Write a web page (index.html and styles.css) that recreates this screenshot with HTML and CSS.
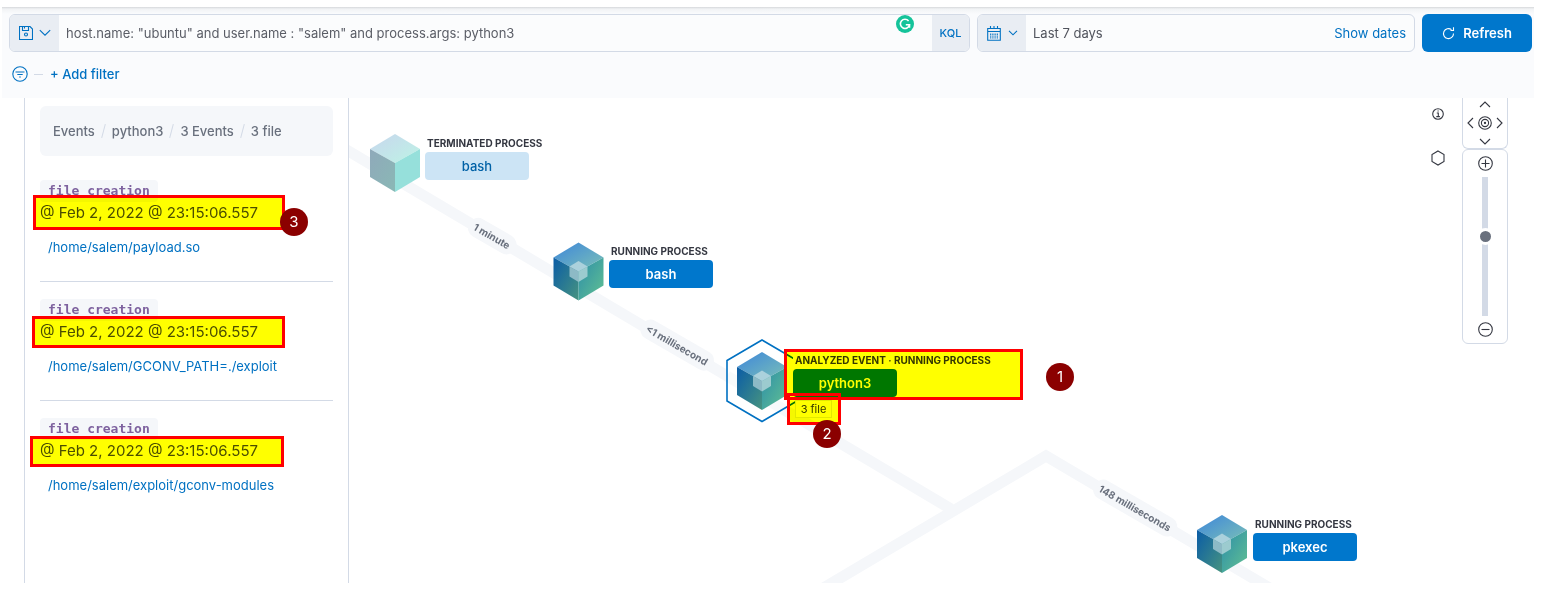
FILE: index.html
```html
<!DOCTYPE html>
<html lang="en">
<head>
<meta charset="utf-8">
<title>Event analyzer</title>
<link rel="stylesheet" href="styles.css">
</head>
<body>
<header class="query-bar">
  <form class="query-row">
    <div class="field search-field">
      <button type="button" class="field-addon saved-query" aria-label="Saved queries">
        <svg width="14" height="14" viewBox="0 0 14 14" class="icon"><path d="M.5.5h10.500l2.500 2.500v10.500h-13z M3.500 .5v4h6v-4 M5.500 .5v2"/><circle cx="7" cy="8.500" r="1.500"/></svg>
        <svg width="12" height="8" viewBox="0 0 12 8" class="icon"><path d="M.8 1.200 6 6.200l5.200-5"/></svg>
      </button>
      <input class="field-input" type="text" aria-label="Search" value='host.name: "ubuntu" and user.name : "salem" and process.args: python3'>
      <svg class="writing-badge" width="18" height="18" viewBox="0 0 18 18"><circle cx="9" cy="9" r="9" fill="#15c39a"/><path d="M12.600 6A4.600 4.600 0 1 0 13.500 9.800H9.800 M13.500 9.800v3" fill="none" stroke="#fff" stroke-width="1.600"/></svg>
      <button type="button" class="field-addon language">KQL</button>
    </div>
    <div class="field date-field">
      <button type="button" class="field-addon date-quick" aria-label="Quick select">
        <svg width="14" height="15" viewBox="0 0 14 15" class="icon"><path d="M.7 2.500h12.600v11.800H.7z M.7 5.500h12.600 M3.500 0v3 M7 0v3 M10.500 0v3"/><path d="M3.700 7.500v5 M5.900 7.500v5 M8.100 7.500v5 M10.300 7.500v5" stroke-dasharray="1.400 .5"/></svg>
        <svg width="10" height="6" viewBox="0 0 10 6" class="icon"><path d="M1 .8 5 4.800l4-4"/></svg>
      </button>
      <span class="date-value">Last 7 days</span>
      <button type="button" class="show-dates">Show dates</button>
    </div>
    <button type="button" class="refresh">
      <svg width="13" height="13" viewBox="0 0 13 13" class="icon"><path d="M11.500 6.500A5 5 0 1 1 9.500 2.600 M11.500 .3v3.200H8.500"/></svg>
      Refresh
    </button>
  </form>
  <div class="filter-row">
    <button type="button" class="filter-toggle" aria-label="Filter options">
      <svg width="16" height="16" viewBox="0 0 16 16" class="icon"><circle cx="8" cy="8" r="7.200"/><path d="M3.500 6h9 M5.300 8.500h5.400 M7.200 11h1.600"/></svg>
    </button>
    <span class="filter-dash"></span>
    <button type="button" class="add-filter">+ Add filter</button>
  </div>
</header>

<main class="workspace">
  <aside class="panel">
    <nav class="crumbs" aria-label="Breadcrumb">
      <a href="#">Events</a><i></i><a href="#">python3</a><i></i><a href="#">3 Events</a><i></i><span>3 file</span>
    </nav>
    <article class="event">
      <code class="event-kind">file creation</code>
      <time class="event-time">@ Feb 2, 2022 @ 23:15:06.557</time>
      <a class="event-path" href="#">/home/salem/payload.so</a>
    </article>
    <article class="event">
      <code class="event-kind">file creation</code>
      <time class="event-time">@ Feb 2, 2022 @ 23:15:06.557</time>
      <a class="event-path" href="#">/home/salem/GCONV_PATH=./exploit</a>
    </article>
    <article class="event">
      <code class="event-kind">file creation</code>
      <time class="event-time">@ Feb 2, 2022 @ 23:15:06.557</time>
      <a class="event-path" href="#">/home/salem/exploit/gconv-modules</a>
    </article>
    <div class="mark mark-time-1"></div>
    <div class="mark mark-time-2"></div>
    <div class="mark mark-time-3"></div>
    <div class="pin pin-3">3</div>
  </aside>

  <section class="graph" aria-label="Process graph">
    <svg class="edges">
      <defs>
        <linearGradient id="top" x1="0" y1="0" x2="1" y2="1"><stop offset=".2" stop-color="#4a92d3"/><stop offset="1" stop-color="#7cc2b6"/></linearGradient>
        <linearGradient id="left" x1="0" y1="0" x2="1" y2="1"><stop offset="0" stop-color="#0a5ca6"/><stop offset="1" stop-color="#479480"/></linearGradient>
        <linearGradient id="right" x1="0" y1="0" x2="1" y2="1"><stop offset="0" stop-color="#2c8da9"/><stop offset="1" stop-color="#62c192"/></linearGradient>
        <linearGradient id="top-off" x1="0" y1="0" x2="1" y2="1"><stop offset=".2" stop-color="#c6dcec"/><stop offset="1" stop-color="#bdf3e5"/></linearGradient>
        <linearGradient id="left-off" x1="0" y1="0" x2="1" y2="1"><stop offset="0" stop-color="#8fa9ba"/><stop offset="1" stop-color="#8ab8b5"/></linearGradient>
        <g id="cube">
          <path fill="url(#top)" d="M0-29 25-14 0 0-25-14z"/>
          <path fill="url(#left)" d="M-25-14 0 0V29L-25 14z"/>
          <path fill="url(#right)" d="M25-14 0 0V29L25 14z"/>
          <path fill="#abd1dc" d="M0-10.500 9-5 0 0-9-5z"/>
          <path fill="#8dbac6" d="M-9-5 0 0V10.500L-9 5z"/>
          <path fill="#9ccbcf" d="M9-5 0 0V10.500L9 5z"/>
        </g>
      </defs>
      <g transform="translate(-349 -98)">
        <g fill="none" stroke="#f5f7fa" stroke-width="11">
          <path d="M330 140 951 509"/>
          <path d="M815 593 1046 456 1278 593"/>
        </g>
        <g transform="translate(395 163)">
          <path fill="url(#top-off)" d="M0-29 25-14 0 0-25-14z"/>
          <path fill="url(#left-off)" d="M-25-14 0 0V29L-25 14z"/>
          <path fill="#96e0db" d="M25-14 0 0V29L25 14z"/>
        </g>
        <use href="#cube" x="578.500" y="271.500"/>
        <path d="M762 340 797 360.500V401L762 421.500 727 401V360.500z" fill="#fff"/>
        <path d="M727 376 803 421" stroke="#f5f7fa" stroke-width="11" opacity=".6"/>
        <path d="M762 340 797 360.500V401L762 421.500 727 401V360.500z" fill="none" stroke="#0071c2" stroke-width="1.600"/>
        <use href="#cube" x="762" y="381"/>
        <use href="#cube" x="1222" y="544"/>
      </g>
    </svg>

    <span class="elapsed elapsed-1">1 minute</span>
    <span class="elapsed elapsed-2">&lt;1 millisecond</span>
    <span class="elapsed elapsed-3">148 milliseconds</span>

    <div class="node node-terminated"><span class="node-state">Terminated process</span><button type="button" class="node-name ended">bash</button></div>
    <div class="node node-bash"><span class="node-state">Running process</span><button type="button" class="node-name">bash</button></div>
    <div class="node node-python"><span class="node-state">Analyzed event · Running process</span><button type="button" class="node-name">python3</button><button type="button" class="node-related">3 file</button></div>
    <div class="node node-pkexec"><span class="node-state">Running process</span><button type="button" class="node-name">pkexec</button></div>

    <div class="mark mark-node"></div>
    <div class="mark mark-files"></div>
    <div class="pin pin-1">1</div>
    <div class="pin pin-2">2</div>

    <div class="controls">
      <div class="legend">
        <button type="button" aria-label="Schema"><svg width="12" height="12" viewBox="0 0 12 12" class="icon"><circle cx="6" cy="6" r="5.300"/><path d="M4.800 5h1.500v3.600 M4.300 8.600h3.600 M5.500 3h1.200"/></svg></button>
        <button type="button" aria-label="Legend"><svg width="14" height="16" viewBox="0 0 14 16" class="icon"><path d="M7 1 13 4.500v7L7 15 1 11.500v-7z"/></svg></button>
      </div>
      <div class="tools">
        <div class="pan">
          <button type="button" class="north" aria-label="North"><svg width="12" height="7" viewBox="0 0 12 7" class="icon"><path d="M1 6 6 1l5 5"/></svg></button>
          <button type="button" class="west" aria-label="West"><svg width="7" height="12" viewBox="0 0 7 12" class="icon"><path d="M6 1 1 6l5 5"/></svg></button>
          <button type="button" class="center" aria-label="Center"><svg width="14" height="14" viewBox="0 0 14 14" class="icon"><circle cx="7" cy="7" r="6.300"/><circle cx="7" cy="7" r="3.600"/><circle cx="7" cy="7" r=".6"/></svg></button>
          <button type="button" class="east" aria-label="East"><svg width="7" height="12" viewBox="0 0 7 12" class="icon"><path d="M1 1l5 5-5 5"/></svg></button>
          <button type="button" class="south" aria-label="South"><svg width="12" height="7" viewBox="0 0 12 7" class="icon"><path d="M1 1l5 5 5-5"/></svg></button>
        </div>
        <div class="zoom">
          <button type="button" aria-label="Zoom in"><svg width="15" height="15" viewBox="0 0 15 15" class="icon"><circle cx="7.500" cy="7.500" r="6.800"/><path d="M3.500 7.500h8 M7.500 3.500v8"/></svg></button>
          <input type="range" class="zoom-range" aria-label="Zoom level" min="0" max="100" value="58">
          <button type="button" aria-label="Zoom out"><svg width="15" height="15" viewBox="0 0 15 15" class="icon"><circle cx="7.500" cy="7.500" r="6.800"/><path d="M3.500 7.500h8"/></svg></button>
        </div>
      </div>
    </div>
  </section>
</main>
</body>
</html>
```
FILE: styles.css
```css
* { box-sizing: border-box; }

body {
  margin: 0;
  min-height: 100vh;
  padding: 7px 8px 29px 2px;
  display: flex;
  flex-direction: column;
  background: #fff;
  color: #343741;
  font: 13px/20px Inter, "Liberation Sans", sans-serif;
}

button {
  margin: 0;
  padding: 0;
  border: 0;
  background: none;
  color: inherit;
  font: inherit;
}

a { color: inherit; text-decoration: none; }

.icon { display: block; flex: none; fill: none; stroke: currentColor; stroke-width: 1.1; }

/* Query bar */
.query-bar {
  padding: 7px 2px 14px 7px;
  background: linear-gradient(#d6d8db, #f1f3f5 2px, #fafbfd 7px);
}

.query-row { display: flex; gap: 7px; }

.field {
  position: relative;
  display: flex;
  height: 38px;
  border: 1px solid #d3dae6;
  border-radius: 6px;
  background: #fbfcfd;
  overflow: hidden;
}

.search-field { flex: 1; }
.date-field { width: 438px; align-items: center; }

.field-addon {
  display: flex;
  align-items: center;
  justify-content: center;
  align-self: stretch;
  background: #e9edf3;
  color: #0071c2;
}

.saved-query { width: 49px; gap: 6px; }
.date-quick { width: 48px; gap: 7px; }
.language { width: 37px; font-size: 11px; font-weight: 500; }

.field-input {
  flex: 1;
  min-width: 0;
  padding: 0 7px;
  border: 0;
  outline: 0;
  background: none;
  color: #5a5d66;
  font: inherit;
}

.writing-badge { position: absolute; top: 0; right: 55px; }

.date-value { flex: 1; padding-left: 7px; color: #50535c; }
.show-dates { padding-right: 8px; color: #0071c2; }

.refresh {
  display: flex;
  align-items: center;
  justify-content: center;
  gap: 8px;
  width: 110px;
  border-radius: 6px;
  background: #0077cc;
  color: #fff;
  font-weight: 600;
}

.filter-row {
  display: flex;
  align-items: center;
  gap: 6px;
  padding: 12px 0 0 3px;
  color: #0071c2;
}

.filter-dash { width: 9px; height: 1px; background: #d3dae6; }
.add-filter { padding-left: 1px; font-weight: 500; }

/* Workspace */
.workspace { flex: 1; display: flex; padding-left: 22px; }

.panel {
  position: relative;
  z-index: 1;
  flex: none;
  width: 325px;
  padding: 8px 15px 0;
  border: solid #d3dae6;
  border-width: 0 1px;
}

.crumbs {
  display: flex;
  align-items: center;
  gap: 8px;
  height: 50px;
  padding: 0 13px;
  border-radius: 6px;
  background: #f5f7fa;
  color: #69707d;
  font-weight: 500;
}

.crumbs i { width: 1px; height: 14px; background: #d3dae6; transform: rotate(15deg); }

.event {
  display: flex;
  flex-direction: column;
  align-items: flex-start;
  height: 119px;
  padding-top: 17px;
  border-bottom: 1px solid #d3dae6;
}

.crumbs + .event { height: 126px; padding-top: 24px; }
.event:last-of-type { border-bottom: 0; }

.event-kind {
  padding: 0 8px;
  border-radius: 4px;
  background: #f5f7fa;
  color: #7e629f;
  font: bold 13px/22px "DejaVu Sans Mono", monospace;
}

.event-time { margin-top: 1px; color: #4b4e58; font-size: 15px; }
.event-path { margin: 14px 0 0 8px; color: #0071c2; }

/* Graph */
.graph { position: relative; flex: 1; min-width: 0; overflow: hidden; }
.edges { position: absolute; inset: 0; width: 100%; height: 100%; }

.elapsed {
  position: absolute;
  padding: 0 6px;
  border-radius: 10px;
  background: #f5f7fa;
  color: #69707d;
  font-size: 10px;
  font-weight: 700;
  white-space: nowrap;
  transform: translate(-50%, -50%) rotate(30deg);
}

.elapsed-1 { left: 143px; top: 138px; }
.elapsed-2 { left: 328px; top: 247px; }
.elapsed-3 { left: 786px; top: 410px; }

.node { position: absolute; width: 104px; }
.node-terminated { left: 76px; top: 37px; }
.node-bash { left: 260px; top: 145px; }
.node-python { left: 444px; top: 254px; }
.node-pkexec { left: 904px; top: 418px; }

.node-state {
  display: block;
  width: max-content;
  padding-left: 2px;
  background: #fff;
  font-size: 10px;
  font-weight: 700;
  line-height: 17px;
  text-transform: uppercase;
  white-space: nowrap;
}

.node-name {
  display: block;
  width: 100%;
  height: 28px;
  border-radius: 4px;
  background: #0077cc;
  color: #fff;
  font-weight: 600;
}

.node-name.ended { background: #cce4f5; color: #0061a6; font-weight: 500; }

.node-related {
  display: block;
  width: 37px;
  height: 18px;
  margin: 3px 0 0 2px;
  border: 1px solid #e3e8f0;
  background: #fff;
  font-size: 11px;
  line-height: 16px;
}

/* Highlighter boxes: opaque frame, fill multiplied with the content below */
.mark { position: absolute; border: 3px solid #f00; }

.mark::before {
  content: "";
  display: block;
  height: 100%;
  background: #ff0;
  mix-blend-mode: multiply;
}

.mark-time-1 { left: 8px; top: 97px; width: 252px; height: 35px; }
.mark-time-2 { left: 7px; top: 218px; width: 253px; height: 32px; }
.mark-time-3 { left: 5px; top: 338px; width: 254px; height: 31px; }
.mark-node { left: 435px; top: 251px; width: 239px; height: 51px; }
.mark-files { left: 438px; top: 295px; width: 54px; height: 32px; }

.pin {
  position: absolute;
  width: 28px;
  height: 28px;
  border-radius: 50%;
  background: #8b0000;
  color: #fff;
  font-size: 15px;
  line-height: 28px;
  text-align: center;
}

.pin-1 { left: 697px; top: 265px; }
.pin-2 { left: 464px; top: 322px; }
.pin-3 { left: 255px; top: 110px; }

/* Camera controls */
.controls {
  position: absolute;
  top: 0;
  right: 26px;
  display: flex;
  align-items: flex-start;
  gap: 17px;
}

.legend {
  display: flex;
  flex-direction: column;
  align-items: center;
  gap: 30px;
  padding-top: 10px;
}

.tools { width: 46px; }

.pan, .zoom { border: 1px solid #d3dae6; border-radius: 6px; background: #fff; }

.pan {
  display: grid;
  grid-template-columns: 1fr 14px 1fr;
  grid-template-areas: ". north ." "west center east" ". south .";
  place-items: center;
  column-gap: 2px;
  row-gap: 8px;
  height: 51px;
  padding: 3px 2px 5px;
  border-top: 0;
  border-radius: 0 0 6px 6px;
}

.north { grid-area: north; }
.west { grid-area: west; }
.center { grid-area: center; }
.east { grid-area: east; }
.south { grid-area: south; }

.zoom {
  display: flex;
  flex-direction: column;
  align-items: center;
  gap: 6px;
  height: 195px;
  padding: 6px 0;
}

.zoom-range {
  appearance: none;
  writing-mode: vertical-lr;
  direction: rtl;
  flex: 1;
  min-height: 0;
  width: 17px;
  margin: 0;
  background: linear-gradient(#d3dae6, #d3dae6) center / 6px 100% no-repeat;
}

.zoom-range::-webkit-slider-thumb {
  appearance: none;
  width: 17px;
  height: 17px;
  border: 3px solid #fff;
  border-radius: 50%;
  background: #69707d;
}
```
